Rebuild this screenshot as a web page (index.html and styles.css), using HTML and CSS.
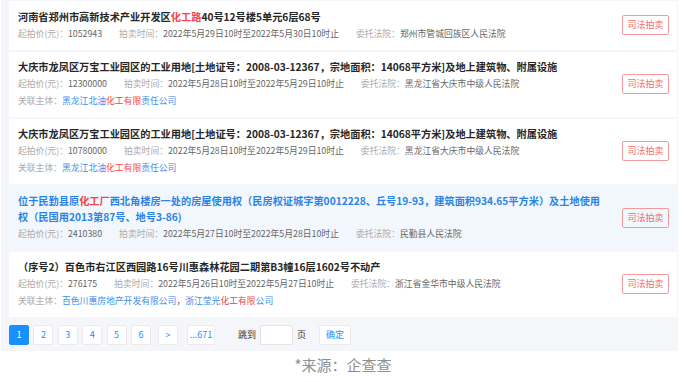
FILE: index.html
```html
<!DOCTYPE html>
<html lang="zh-CN">
<head>
<meta charset="utf-8">
<title>司法拍卖</title>
<link rel="stylesheet" href="styles.css">
</head>
<body>
<div class="panel">
  <div class="list">
    <div class="card card-first">
      <div class="info">
        <div class="title">河南省郑州市高新技术产业开发区<em>化工路</em>40号12号楼5单元6层68号</div>
        <div class="meta">
          <span class="mi"><span class="lb">起拍价(元)：</span><span class="val">1052943</span></span>
          <span class="mi"><span class="lb">拍卖时间：</span><span class="val">2022年5月29日10时至2022年5月30日10时止</span></span>
          <span class="mi"><span class="lb">委托法院：</span><span class="val">郑州市管城回族区人民法院</span></span>
        </div>
      </div>
      <span class="tag">司法拍卖</span>
    </div>
    <div class="card">
      <div class="info">
        <div class="title">大庆市龙凤区万宝工业园区的工业用地[土地证号：2008-03-12367，宗地面积：14068平方米]及地上建筑物、附属设施</div>
        <div class="meta">
          <span class="mi"><span class="lb">起拍价(元)：</span><span class="val">12300000</span></span>
          <span class="mi"><span class="lb">拍卖时间：</span><span class="val">2022年5月28日10时至2022年5月29日10时止</span></span>
          <span class="mi"><span class="lb">委托法院：</span><span class="val">黑龙江省大庆市中级人民法院</span></span>
        </div>
        <div class="meta">
          <span class="lb">关联主体：</span><span class="link">黑龙江北油<em>化工有限</em>责任公司</span>
        </div>
      </div>
      <span class="tag">司法拍卖</span>
    </div>
    <div class="card">
      <div class="info">
        <div class="title">大庆市龙凤区万宝工业园区的工业用地[土地证号：2008-03-12367，宗地面积：14068平方米]及地上建筑物、附属设施</div>
        <div class="meta">
          <span class="mi"><span class="lb">起拍价(元)：</span><span class="val">10780000</span></span>
          <span class="mi"><span class="lb">拍卖时间：</span><span class="val">2022年5月28日10时至2022年5月29日10时止</span></span>
          <span class="mi"><span class="lb">委托法院：</span><span class="val">黑龙江省大庆市中级人民法院</span></span>
        </div>
        <div class="meta">
          <span class="lb">关联主体：</span><span class="link">黑龙江北油<em>化工有限</em>责任公司</span>
        </div>
      </div>
      <span class="tag">司法拍卖</span>
    </div>
    <div class="card card-active">
      <div class="info">
        <div class="title title-nowrap">位于民勤县原<em>化工厂</em>西北角楼房一处的房屋使用权（民房权证城字第0012228、丘号19-93，建筑面积934.65平方米）及土地使用<br>权（民国用2013第87号、地号3-86)</div>
        <div class="meta">
          <span class="mi"><span class="lb">起拍价(元)：</span><span class="val">2410380</span></span>
          <span class="mi"><span class="lb">拍卖时间：</span><span class="val">2022年5月27日10时至2022年5月28日10时止</span></span>
          <span class="mi"><span class="lb">委托法院：</span><span class="val">民勤县人民法院</span></span>
        </div>
      </div>
      <span class="tag">司法拍卖</span>
    </div>
    <div class="card">
      <div class="info">
        <div class="title">（序号2）百色市右江区西园路16号川惠森林花园二期第B3幢16层1602号不动产</div>
        <div class="meta">
          <span class="mi"><span class="lb">起拍价(元)：</span><span class="val">276175</span></span>
          <span class="mi"><span class="lb">拍卖时间：</span><span class="val">2022年5月26日10时至2022年5月27日10时止</span></span>
          <span class="mi"><span class="lb">委托法院：</span><span class="val">浙江省金华市中级人民法院</span></span>
        </div>
        <div class="meta">
          <span class="lb">关联主体：</span><span class="link">百色川惠房地产开发有限公司</span><span class="val">，</span><span class="link">浙江莹光<em>化工有限</em>公司</span>
        </div>
      </div>
      <span class="tag">司法拍卖</span>
    </div>
  </div>
  <div class="pager">
    <span class="pg pg-on">1</span>
    <span class="pg">2</span>
    <span class="pg">3</span>
    <span class="pg">4</span>
    <span class="pg">5</span>
    <span class="pg">6</span>
    <span class="pg pg-next">&gt;</span>
    <span class="pg pg-last">...671</span>
    <span class="pg-text pg-jump">跳到</span>
    <span class="pg-input"></span>
    <span class="pg-text">页</span>
    <span class="pg pg-ok">确定</span>
  </div>
</div>
<div class="source">*来源：企查查</div>
</body>
</html>
```
FILE: styles.css
```css
html, body {
  margin: 0;
  padding: 0;
  background: #ffffff;
  font-family: "Noto Sans CJK SC", "Noto Sans", sans-serif;
}

.panel {
  width: 677px;
  margin-left: 1px;
  box-sizing: border-box;
  padding: 1px 1px 6px 8px;
  background: #f5f6f9;
}

.list {
  display: flex;
  flex-direction: column;
  gap: 2px;
}

.card {
  display: flex;
  align-items: center;
  box-sizing: border-box;
  min-height: 49px;
  padding: 7px 8px 8px 9px;
  background: #ffffff;
}

.card-active {
  background: #f2f6fd;
}

.info {
  flex: 1;
  min-width: 0;
  display: flex;
  flex-direction: column;
  gap: 1px;
}

.title {
  font-size: 10.2px;
  line-height: 16px;
  font-weight: 700;
  color: #262626;
}

.title-nowrap {
  white-space: nowrap;
}

.card-active .title {
  color: #2a84e6;
}

em {
  font-style: normal;
  color: #f2454b;
}

.meta {
  font-size: 8.8px;
  line-height: 16px;
  white-space: nowrap;
}

.mi {
  margin-right: 15px;
}

.lb {
  color: #ababab;
}

.val {
  color: #666666;
}

.link {
  color: #3d8ee8;
}

.tag {
  flex: none;
  box-sizing: border-box;
  width: 47px;
  height: 20px;
  margin-left: 6px;
  border: 1px solid #f49a9a;
  border-radius: 2px;
  color: #f06a6a;
  font-size: 9px;
  line-height: 18px;
  text-align: center;
}

.pager {
  display: flex;
  align-items: center;
  margin-top: 8px;
  height: 20px;
}

.pg {
  box-sizing: border-box;
  min-width: 20px;
  height: 20px;
  margin-right: 4.4px;
  padding: 0 4px;
  border: 1px solid #ebebeb;
  border-radius: 2px;
  background: #ffffff;
  color: #1890ff;
  font-size: 9px;
  line-height: 18px;
  text-align: center;
}

.pg-on {
  background: #1890ff;
  border-color: #1890ff;
  color: #ffffff;
}

.pg-next {
  margin-left: 2.6px;
  margin-right: 9px;
}

.pg-last {
  width: 28px;
  padding: 0;
}

.pg-text {
  font-size: 9px;
  line-height: 20px;
  color: #333333;
}

.pg-jump {
  margin-left: 18.6px;
  margin-right: 4px;
}

.pg-input {
  box-sizing: border-box;
  width: 33px;
  height: 20px;
  margin-right: 4px;
  border: 1px solid #e3e3e3;
  border-radius: 2px;
  background: #ffffff;
}

.pg-ok {
  width: 32px;
  margin-left: 13px;
  padding: 0;
}

.source {
  margin-top: 4px;
  text-align: center;
  font-size: 15px;
  line-height: 20px;
  color: #8f8f8f;
}
```
